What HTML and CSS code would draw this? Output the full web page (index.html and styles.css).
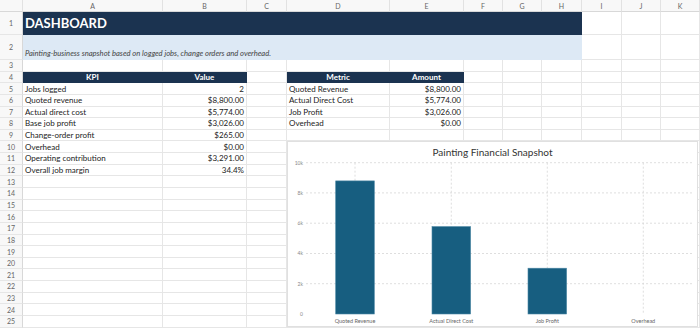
FILE: index.html
```html
<!DOCTYPE html>
<html>
<head>
<meta charset="utf-8">
<link rel="stylesheet" href="styles.css">
</head>
<body>
<div class="sheet">
  <div class="grid">
    <div class="hd corner"></div><div class="hd">A</div><div class="hd">B</div><div class="hd">C</div><div class="hd">D</div><div class="hd">E</div><div class="hd">F</div><div class="hd">G</div><div class="hd">H</div><div class="hd">I</div><div class="hd">J</div><div class="hd">K</div>

    <div class="rh">1</div><div class="c title">DASHBOARD</div><div class="c"></div><div class="c"></div><div class="c"></div>
    <div class="rh">2</div><div class="c subtitle">Painting-business snapshot based on logged jobs, change orders and overhead.</div><div class="c"></div><div class="c"></div><div class="c"></div>
    <div class="rh">3</div><div class="c"></div><div class="c"></div><div class="c"></div><div class="c"></div><div class="c"></div><div class="c"></div><div class="c"></div><div class="c"></div><div class="c"></div><div class="c"></div><div class="c"></div>
    <div class="rh">4</div><div class="c th">KPI</div><div class="c th">Value</div><div class="c"></div><div class="c th">Metric</div><div class="c th">Amount</div><div class="c"></div><div class="c"></div><div class="c"></div><div class="c"></div><div class="c"></div><div class="c"></div>
    <div class="rh">5</div><div class="c">Jobs logged</div><div class="c num">2</div><div class="c"></div><div class="c">Quoted Revenue</div><div class="c num">$8,800.00</div><div class="c"></div><div class="c"></div><div class="c"></div><div class="c"></div><div class="c"></div><div class="c"></div>
    <div class="rh">6</div><div class="c">Quoted revenue</div><div class="c num">$8,800.00</div><div class="c"></div><div class="c">Actual Direct Cost</div><div class="c num">$5,774.00</div><div class="c"></div><div class="c"></div><div class="c"></div><div class="c"></div><div class="c"></div><div class="c"></div>
    <div class="rh">7</div><div class="c">Actual direct cost</div><div class="c num">$5,774.00</div><div class="c"></div><div class="c">Job Profit</div><div class="c num">$3,026.00</div><div class="c"></div><div class="c"></div><div class="c"></div><div class="c"></div><div class="c"></div><div class="c"></div>
    <div class="rh">8</div><div class="c">Base job profit</div><div class="c num">$3,026.00</div><div class="c"></div><div class="c">Overhead</div><div class="c num">$0.00</div><div class="c"></div><div class="c"></div><div class="c"></div><div class="c"></div><div class="c"></div><div class="c"></div>
    <div class="rh">9</div><div class="c">Change-order profit</div><div class="c num">$265.00</div><div class="c"></div><div class="c"></div><div class="c"></div><div class="c"></div><div class="c"></div><div class="c"></div><div class="c"></div><div class="c"></div><div class="c"></div>
    <div class="rh">10</div><div class="c">Overhead</div><div class="c num">$0.00</div><div class="c"></div><div class="c"></div><div class="c"></div><div class="c"></div><div class="c"></div><div class="c"></div><div class="c"></div><div class="c"></div><div class="c"></div>
    <div class="rh">11</div><div class="c">Operating contribution</div><div class="c num">$3,291.00</div><div class="c"></div><div class="c"></div><div class="c"></div><div class="c"></div><div class="c"></div><div class="c"></div><div class="c"></div><div class="c"></div><div class="c"></div>
    <div class="rh">12</div><div class="c">Overall job margin</div><div class="c num">34.4%</div><div class="c"></div><div class="c"></div><div class="c"></div><div class="c"></div><div class="c"></div><div class="c"></div><div class="c"></div><div class="c"></div><div class="c"></div>
    <div class="rh">13</div><div class="c"></div><div class="c"></div><div class="c"></div><div class="c"></div><div class="c"></div><div class="c"></div><div class="c"></div><div class="c"></div><div class="c"></div><div class="c"></div><div class="c"></div>
    <div class="rh">14</div><div class="c"></div><div class="c"></div><div class="c"></div><div class="c"></div><div class="c"></div><div class="c"></div><div class="c"></div><div class="c"></div><div class="c"></div><div class="c"></div><div class="c"></div>
    <div class="rh">15</div><div class="c"></div><div class="c"></div><div class="c"></div><div class="c"></div><div class="c"></div><div class="c"></div><div class="c"></div><div class="c"></div><div class="c"></div><div class="c"></div><div class="c"></div>
    <div class="rh">16</div><div class="c"></div><div class="c"></div><div class="c"></div><div class="c"></div><div class="c"></div><div class="c"></div><div class="c"></div><div class="c"></div><div class="c"></div><div class="c"></div><div class="c"></div>
    <div class="rh">17</div><div class="c"></div><div class="c"></div><div class="c"></div><div class="c"></div><div class="c"></div><div class="c"></div><div class="c"></div><div class="c"></div><div class="c"></div><div class="c"></div><div class="c"></div>
    <div class="rh">18</div><div class="c"></div><div class="c"></div><div class="c"></div><div class="c"></div><div class="c"></div><div class="c"></div><div class="c"></div><div class="c"></div><div class="c"></div><div class="c"></div><div class="c"></div>
    <div class="rh">19</div><div class="c"></div><div class="c"></div><div class="c"></div><div class="c"></div><div class="c"></div><div class="c"></div><div class="c"></div><div class="c"></div><div class="c"></div><div class="c"></div><div class="c"></div>
    <div class="rh">20</div><div class="c"></div><div class="c"></div><div class="c"></div><div class="c"></div><div class="c"></div><div class="c"></div><div class="c"></div><div class="c"></div><div class="c"></div><div class="c"></div><div class="c"></div>
    <div class="rh">21</div><div class="c"></div><div class="c"></div><div class="c"></div><div class="c"></div><div class="c"></div><div class="c"></div><div class="c"></div><div class="c"></div><div class="c"></div><div class="c"></div><div class="c"></div>
    <div class="rh">22</div><div class="c"></div><div class="c"></div><div class="c"></div><div class="c"></div><div class="c"></div><div class="c"></div><div class="c"></div><div class="c"></div><div class="c"></div><div class="c"></div><div class="c"></div>
    <div class="rh">23</div><div class="c"></div><div class="c"></div><div class="c"></div><div class="c"></div><div class="c"></div><div class="c"></div><div class="c"></div><div class="c"></div><div class="c"></div><div class="c"></div><div class="c"></div>
    <div class="rh">24</div><div class="c"></div><div class="c"></div><div class="c"></div><div class="c"></div><div class="c"></div><div class="c"></div><div class="c"></div><div class="c"></div><div class="c"></div><div class="c"></div><div class="c"></div>
    <div class="rh">25</div><div class="c"></div><div class="c"></div><div class="c"></div><div class="c"></div><div class="c"></div><div class="c"></div><div class="c"></div><div class="c"></div><div class="c"></div><div class="c"></div><div class="c"></div>
  </div>

  <div class="chart">
    <svg class="plot" width="411" height="186" viewBox="0 0 411 186">
      <text class="ctitle" x="205.5" y="15" text-anchor="middle">Painting Financial Snapshot</text>
      <g class="gl">
        <line x1="19" y1="21.7" x2="405" y2="21.7"/>
        <line x1="19" y1="51.9" x2="405" y2="51.9"/>
        <line x1="19" y1="82.2" x2="405" y2="82.2"/>
        <line x1="19" y1="112.5" x2="405" y2="112.5"/>
        <line x1="19" y1="142.7" x2="405" y2="142.7"/>
        <line x1="68" y1="21.7" x2="68" y2="173"/>
        <line x1="164.3" y1="21.7" x2="164.3" y2="173"/>
        <line x1="260.3" y1="21.7" x2="260.3" y2="173"/>
        <line x1="356.3" y1="21.7" x2="356.3" y2="173"/>
      </g>
      <g class="yl" text-anchor="end">
        <text x="16" y="23.5">10k</text>
        <text x="16" y="53.7">8k</text>
        <text x="16" y="84">6k</text>
        <text x="16" y="114.3">4k</text>
        <text x="16" y="144.5">2k</text>
        <text x="16" y="174.8">0</text>
      </g>
      <g class="bar">
        <rect x="48.7" y="39.9" width="38.6" height="133.1"/>
        <rect x="145" y="85.6" width="38.6" height="87.4"/>
        <rect x="241" y="127.2" width="38.6" height="45.8"/>
      </g>
      <g class="xl" text-anchor="middle">
        <text x="68" y="182">Quoted Revenue</text>
        <text x="164.3" y="182">Actual Direct Cost</text>
        <text x="260.3" y="182">Job Profit</text>
        <text x="356.3" y="182">Overhead</text>
      </g>
    </svg>
  </div>
</div>
</body>
</html>
```

FILE: styles.css
```css
* { box-sizing: border-box; }
html, body { margin: 0; padding: 0; background: #fff; }
body { font-family: Lato, "Open Sans", sans-serif; color: #222; }

.sheet { position: relative; width: 700px; height: 328px; overflow: hidden; }

.grid {
  display: grid;
  grid-template-columns: 23px 140px 84px 40px 103px 74px 39px 39px 40px 40px 39px 39px;
  grid-template-rows: 12px 23px 25px 11.6px repeat(22, 11.65px);
}

.hd {
  background: #f8f8f8;
  border-right: 1px solid #e2e2e2;
  border-bottom: 1px solid #d8d8d8;
  font-size: 7px;
  color: #666;
  display: flex; align-items: center; justify-content: center;
}
.rh {
  background: #f8f8f8;
  border-right: 1px solid #d8d8d8;
  border-bottom: 1px solid #e6e6e6;
  font-size: 7px;
  color: #666;
  display: flex; align-items: center; justify-content: center;
}
.c {
  border-right: 1px solid #e6e6e6;
  border-bottom: 1px solid #e6e6e6;
  font-size: 8px;
  padding: 0 2px;
  display: flex; align-items: center;
  white-space: nowrap;
  overflow: hidden;
}
.num { justify-content: flex-end; }

.title {
  grid-column: span 8;
  background: #1b3350;
  border-color: #1b3350;
  color: #fff;
  font-weight: 700;
  font-size: 13px;
}
.subtitle {
  grid-column: span 8;
  background: #dde9f5;
  border-color: #dde9f5;
  color: #444;
  font-style: italic;
  font-size: 7.6px;
  align-items: flex-end;
  padding-bottom: 1.5px;
  overflow: visible;
}
.th {
  background: #1b3350;
  border-color: #1b3350;
  color: #fff;
  font-weight: 700;
  justify-content: center;
}

.chart {
  position: absolute;
  left: 287px; top: 141px;
  width: 411px; height: 186px;
  background: #fff;
  border: 1px solid #e0e0e0;
}
.plot { display: block; position: absolute; left: -1px; top: -1px; }
.ctitle { font-family: Lato, sans-serif; font-size: 10px; fill: #333; }
.gl line { stroke: #d6d6d6; stroke-width: 0.8; stroke-dasharray: 2 2; }
.yl text { font-family: Lato, sans-serif; font-size: 5px; fill: #888; }
.xl text { font-family: Lato, sans-serif; font-size: 5.5px; fill: #666; }
.bar rect { fill: #175e80; stroke: #4a86a3; stroke-width: 0.6; }
```
